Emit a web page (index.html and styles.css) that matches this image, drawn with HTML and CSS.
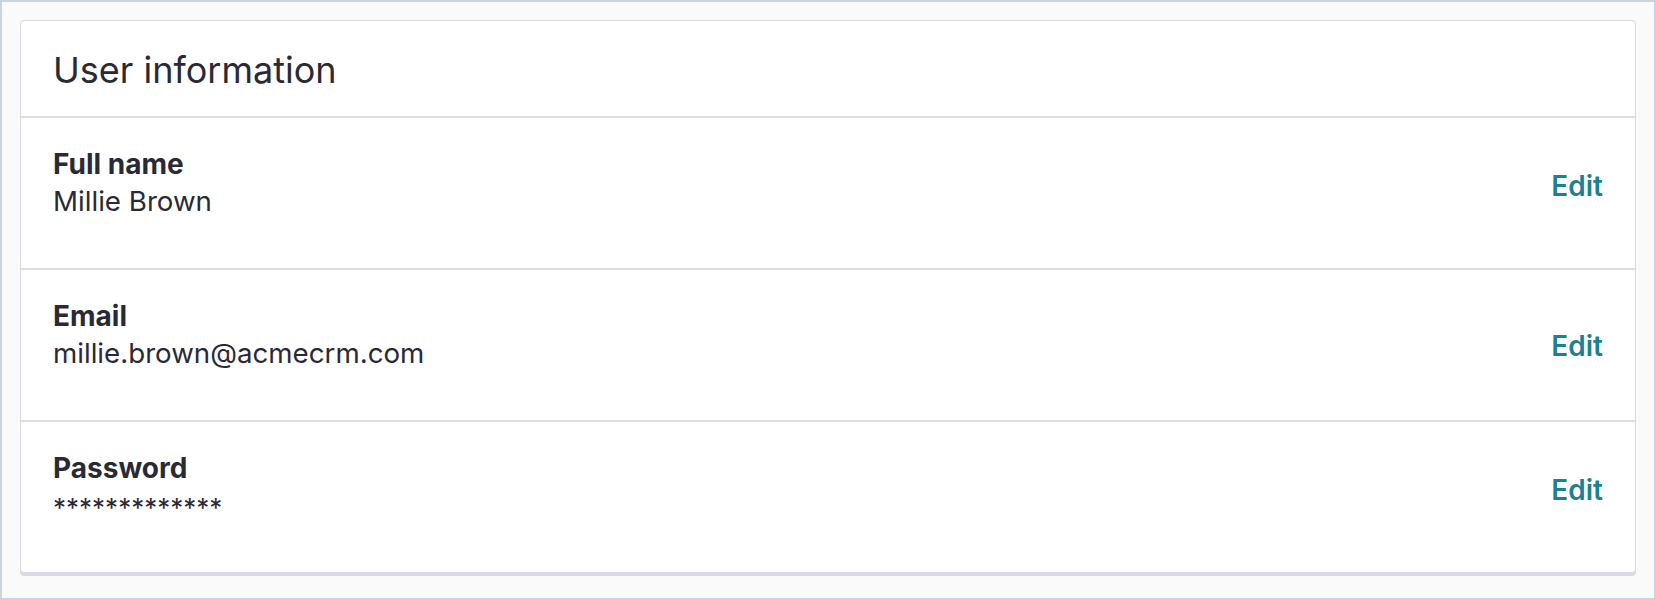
FILE: index.html
```html
<!DOCTYPE html>
<html lang="en">
<head>
<meta charset="utf-8">
<title>User information</title>
<link rel="stylesheet" href="styles.css">
</head>
<body>
<div class="frame">
  <section class="card">
    <header class="card-header">
      <h2 class="card-title">User information</h2>
    </header>
    <div class="row">
      <div class="field">
        <div class="label">Full name</div>
        <div class="value">Millie Brown</div>
      </div>
      <a class="edit" href="#">Edit</a>
    </div>
    <div class="row">
      <div class="field">
        <div class="label">Email</div>
        <div class="value">millie.brown@acmecrm.com</div>
      </div>
      <a class="edit edit--low" href="#">Edit</a>
    </div>
    <div class="row">
      <div class="field">
        <div class="label">Password</div>
        <div class="value value--secret">*************</div>
      </div>
      <a class="edit" href="#">Edit</a>
    </div>
  </section>
</div>
</body>
</html>
```
FILE: styles.css
```css
* { box-sizing: border-box; }
html, body { margin: 0; padding: 0; }
body {
  font-family: Inter, "Noto Sans", "Liberation Sans", sans-serif;
  color: #2a2a35;
  background: #fafafa;
}
.frame {
  height: 600px;
  border: 2px solid #c8d5df;
  background: #fafafa;
  padding: 18px;
}
.card {
  background: #ffffff;
  border: 1px solid #dadae4;
  border-radius: 4px;
  box-shadow: 0 3px 0 #dadae4;
}
.card-header {
  padding: 25px 32px 22px;
}
.card-title {
  margin: 0;
  font-size: 36px;
  line-height: 48px;
  font-weight: 400;
}
.row {
  display: flex;
  align-items: center;
  justify-content: space-between;
  border-top: 2px solid #dcdce7;
  padding: 28px 32px 49px;
}
.label {
  font-size: 28px;
  line-height: 36px;
  font-weight: 700;
}
.value {
  margin-top: 1px;
  font-size: 27.7px;
  line-height: 36px;
  font-weight: 400;
}
.value--secret {
  font-size: 26px;
  margin-top: 4px;
  margin-bottom: -3px;
}
.edit {
  margin-top: 7px;
  font-size: 28px;
  line-height: 36px;
  font-weight: 600;
  color: #1e8095;
  text-decoration: none;
}
.edit--low {
  margin-top: 22px;
}
```
